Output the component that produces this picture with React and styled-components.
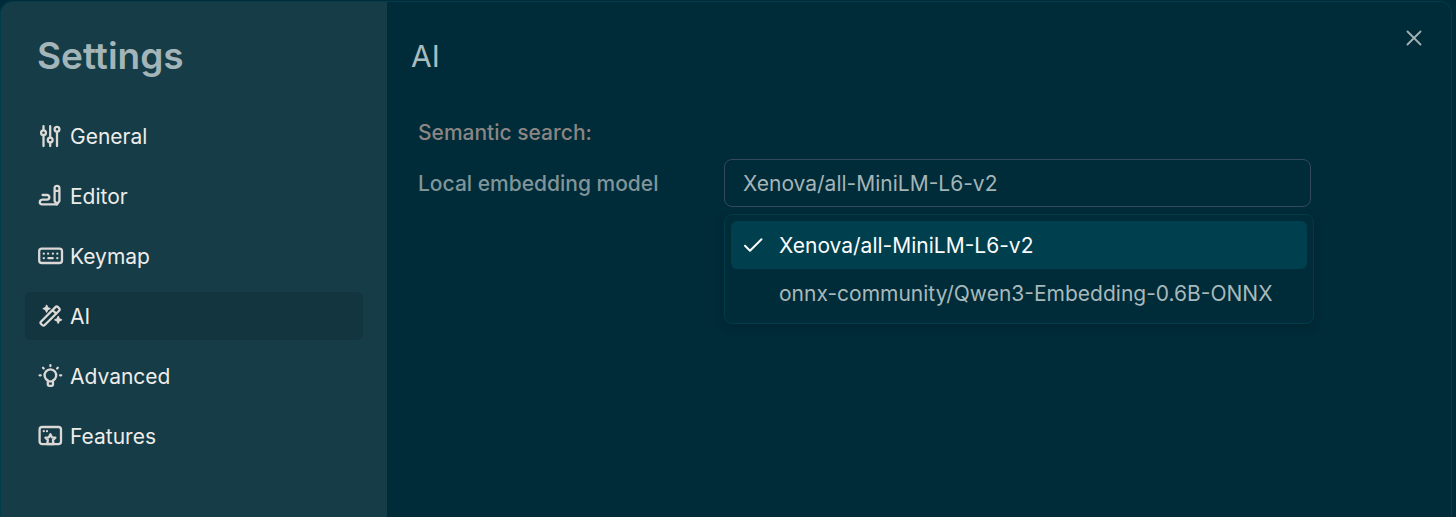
import React, { useState } from "react";
import styled, { createGlobalStyle } from "styled-components";

const GlobalStyle = createGlobalStyle`
  *, *::before, *::after { box-sizing: border-box; }
  body {
    margin: 0;
    background: #002b38;
    font-family: Inter, "Liberation Sans", sans-serif;
    font-size: 21px;
    line-height: 29px;
  }
  h1, h2, h3, ul { margin: 0; padding: 0; }
  button, select { font: inherit; color: inherit; }
`;

const Backdrop = styled.div`
  display: flex;
  min-height: 100vh;
  padding: 1px 4px 0 0;
`;

const Dialog = styled.div`
  display: flex;
  flex: 1;
  overflow: hidden;
  background: #002b38;
  border: 1px solid #003c4a;
  border-bottom: 0;
  border-radius: 12px 12px 0 0;
`;

const Sidebar = styled.aside`
  flex: 0 0 386px;
  padding: 32px 24px;
  background: #153c47;
`;

const SidebarTitle = styled.h1`
  margin-bottom: 34px;
  padding-left: 12px;
  color: #a3b5b8;
  font-size: 37px;
  font-weight: 600;
  line-height: 44px;
`;

const Nav = styled.nav`
  display: flex;
  flex-direction: column;
  gap: 12px;
`;

const NavItem = styled.button`
  display: flex;
  align-items: center;
  gap: 6px;
  height: 48px;
  padding: 0 13px;
  border: 0;
  border-radius: 6px;
  background: ${(p) => (p.$active ? "#12353f" : "transparent")};
  color: #eeecea;
  text-align: left;
  cursor: pointer;
`;

const NavIcon = styled.svg`
  flex: none;
  width: 26px;
  height: 24px;
  color: #dcd8d6;
  fill: none;
  stroke: currentColor;
  stroke-width: 2.3;
  stroke-linecap: round;
  stroke-linejoin: round;
`;

const Content = styled.main`
  flex: 1;
  min-width: 0;
  padding: 32px 36px 32px 24px;
`;

const ContentHeader = styled.header`
  display: flex;
  align-items: flex-start;
  justify-content: space-between;
  margin-bottom: 40px;
`;

const ContentTitle = styled.h2`
  color: #a9bcbf;
  font-size: 30px;
  font-weight: 400;
  line-height: 44px;
`;

const CloseButton = styled.button`
  display: flex;
  padding: 4px;
  margin: -12px -15px;
  border: 0;
  background: transparent;
  color: #9fb0b3;
  cursor: pointer;

  svg { width: 24px; height: 24px; }
`;

const Section = styled.section`
  padding: 0 104px 0 7px;
`;

const SectionTitle = styled.h3`
  margin-bottom: 12px;
  color: #8a8684;
  font-size: 21px;
  font-weight: 500;
`;

const FieldRow = styled.div`
  display: grid;
  grid-template-columns: 306px 1fr;
  align-items: center;
`;

const FieldLabel = styled.label`
  color: #80959a;
  font-weight: 500;
`;

const SelectWrap = styled.div`
  position: relative;
`;

const Select = styled.select`
  display: block;
  width: 100%;
  height: 48px;
  padding: 0 18px;
  appearance: none;
  border: 1px solid #34495a;
  border-radius: 8px;
  outline: 0;
  background: transparent;
  color: #a5b5b7;
`;

const Menu = styled.ul`
  position: absolute;
  top: calc(100% + 7px);
  left: 0;
  right: -3px;
  padding: 6px;
  border: 1px solid #003c4a;
  border-radius: 8px;
  background: #002b38;
  box-shadow: 0 4px 8px rgba(0, 20, 28, 0.2);
  list-style: none;
`;

const MenuItem = styled.li`
  display: grid;
  grid-template-columns: 24px 1fr;
  align-items: center;
  column-gap: 14px;
  height: 48px;
  padding: 0 10px;
  border-radius: 6px;
  background: ${(p) => (p.$selected ? "#003f4e" : "transparent")};
  color: ${(p) => (p.$selected ? "#fbfdfd" : "#a8b9bb")};
  white-space: nowrap;
  cursor: pointer;

  svg { width: 24px; height: 24px; }
  span { grid-column: 2; }
`;

const icons = {
  General: (
    <>
      <path d="M5.5 2.2v4M5.500 11v11M12.200 2.200v11.400M12.200 18.500V22M19 7.800V22" />
      <circle cx="5.5" cy="8.7" r="2.4" />
      <circle cx="12.2" cy="16.1" r="2.4" />
      <circle cx="19" cy="5.3" r="2.4" />
    </>
  ),
  Editor: (
    <>
      <path d="M4.600 11h4.400a2.300 2.300 0 0 1 0 4.600H4.200a2.700 2.700 0 0 0-2.400 2.700c0 1.200 1 2 2.300 2h14.800" />
      <path d="M16.600 4.300a2.400 2.400 0 0 1 4.800 0V17l-2.400 3.300L16.600 17ZM16.600 6.800h4.800" />
    </>
  ),
  Keymap: (
    <>
      <rect x="1.200" y="4.600" width="22.800" height="14.400" rx="2.600" />
      <path d="M5.800 9.700h.01M10.100 9.700h.01M14.900 9.700h.01M19.300 9.700h.01M5.800 14.200h.01M10.400 14.200h4.300M19.300 14.200h.01" />
    </>
  ),
  AI: (
    <>
      <path d="M17.700 2.900a1.400 1.400 0 0 1 2 0l1.600 1.600a1.400 1.400 0 0 1 0 2L6.500 21.300a1.400 1.400 0 0 1-2 0l-1.600-1.600a1.400 1.400 0 0 1 0-2ZM14.600 6l3.700 3.700" />
      <path
        d="M8.600 1.400 9.600 3.700 11.900 4.700 9.600 5.700 8.600 8 7.600 5.700 5.300 4.700 7.600 3.700ZM20.200 12.500l1 2.300 2.300 1-2.300 1-1 2.300-1-2.300-2.300-1 2.300-1Z"
        fill="currentColor"
        strokeWidth="1.4"
      />
    </>
  ),
  Advanced: (
    <>
      <path d="M9.800 16.400a5.800 5.800 0 1 1 5.200 0v3.900a1.600 1.600 0 0 1-1.600 1.600h-2a1.600 1.600 0 0 1-1.600-1.600ZM9.800 17.300h5.200" />
      <path d="M12.400 1.200v.800M5 3.800l.700.700M19.800 3.800l-.700.700M1.600 11.300h1.100M22.100 11.300h1.100" />
    </>
  ),
  Features: (
    <>
      <rect x="1.600" y="3" width="21.400" height="17.200" rx="2.600" />
      <path d="M5.800 7.200h.01M9 7.200h.01" />
      <path d="m12.400 10.200 1.500 3.100 3.500.4-2.500 2.400.7 3.900H9.200l.7-3.900-2.500-2.400 3.500-.4Z" />
    </>
  ),
};

const sections = ["General", "Editor", "Keymap", "AI", "Advanced", "Features"];
const models = ["Xenova/all-MiniLM-L6-v2", "onnx-community/Qwen3-Embedding-0.6B-ONNX"];

export default function App() {
  const [active, setActive] = useState("AI");
  const [model, setModel] = useState(models[0]);

  return (
    <>
      <GlobalStyle />
      <Backdrop>
        <Dialog role="dialog" aria-labelledby="settings-title">
          <Sidebar>
            <SidebarTitle id="settings-title">Settings</SidebarTitle>
            <Nav>
              {sections.map((name) => (
                <NavItem
                  key={name}
                  type="button"
                  $active={name === active}
                  aria-current={name === active ? "page" : undefined}
                  onClick={() => setActive(name)}
                >
                  <NavIcon viewBox="0 0 26 24" aria-hidden="true">{icons[name]}</NavIcon>
                  {name}
                </NavItem>
              ))}
            </Nav>
          </Sidebar>
          <Content>
            <ContentHeader>
              <ContentTitle>{active}</ContentTitle>
              <CloseButton type="button" aria-label="Close">
                <svg viewBox="0 0 24 24" fill="none" stroke="currentColor" strokeWidth="1.9" strokeLinecap="round">
                  <path d="m5.500 5.500 13 13M18.500 5.500l-13 13" />
                </svg>
              </CloseButton>
            </ContentHeader>
            <Section>
              <SectionTitle>Semantic search:</SectionTitle>
              <FieldRow>
                <FieldLabel htmlFor="embedding-model">Local embedding model</FieldLabel>
                <SelectWrap>
                  <Select id="embedding-model" value={model} onChange={(e) => setModel(e.target.value)}>
                    {models.map((m) => (
                      <option key={m}>{m}</option>
                    ))}
                  </Select>
                  <Menu role="listbox" aria-label="Local embedding model">
                    {models.map((m) => (
                      <MenuItem
                        key={m}
                        role="option"
                        aria-selected={m === model}
                        $selected={m === model}
                        onClick={() => setModel(m)}
                      >
                        {m === model && (
                          <svg viewBox="0 0 24 24" fill="none" stroke="currentColor" strokeWidth="2" strokeLinecap="round" strokeLinejoin="round">
                            <path d="m4 12.800 5 5L20.500 6.300" />
                          </svg>
                        )}
                        <span>{m}</span>
                      </MenuItem>
                    ))}
                  </Menu>
                </SelectWrap>
              </FieldRow>
            </Section>
          </Content>
        </Dialog>
      </Backdrop>
    </>
  );
}
